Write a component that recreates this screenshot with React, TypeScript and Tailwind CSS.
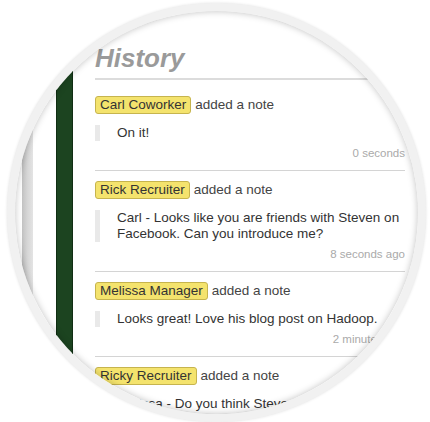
const entries = [
  {
    name: "Carl Coworker",
    note: "On it!",
    time: "0 seconds",
  },
  {
    name: "Rick Recruiter",
    note: "Carl - Looks like you are friends with Steven on Facebook. Can you introduce me?",
    time: "8 seconds ago",
  },
  {
    name: "Melissa Manager",
    note: "Looks great! Love his blog post on Hadoop.",
    time: "2 minutes ago",
  },
  {
    name: "Ricky Recruiter",
    note: "Melissa - Do you think Steven would be a good fit for the team?",
    time: "3 minutes ago",
  },
];

export default function App() {
  return (
    <div className="relative w-[430px] h-[422px] bg-white overflow-hidden font-['Liberation_Sans',Arial,sans-serif]">
      {/* Magnifier lens */}
      <div className="absolute left-[7px] top-[3px] w-[419px] h-[419px] rounded-full border-[8px] border-[#f1f1f1] bg-white overflow-hidden shadow-[0_0_3px_rgba(0,0,0,0.12)]">
        <div className="flex h-full pl-[7px]">
          {/* left page chrome */}
          <div className="w-[11px] shrink-0 bg-gradient-to-r from-[#c2c2c2] via-[#d6d6d6] to-[#e4e4e4]" />
          <div className="w-[23px] shrink-0" />
          <div className="w-[17px] shrink-0 bg-[#1c4420] border-x border-[#102d13]" />

          {/* History panel */}
          <div className="ml-[22px] w-[310px] shrink-0 pt-[32px]">
            <h2 className="text-[26px] leading-[30px] font-bold italic text-[#9a9a9a] pb-[5px] border-b-2 border-[#dcdcdc] w-[340px]">
              History
            </h2>
            <div className="pt-[6px]">
              {entries.map((e) => (
                <div key={e.name} className="pt-[10px] pb-[10px] border-b border-[#d4d4d4]">
                  <div className="flex items-center text-[13.5px] leading-[16px] text-[#444444]">
                    <span className="bg-[#f4e36d] border border-[#c6b44e] rounded-[3px] px-[4px] text-[#333333]">
                      {e.name}
                    </span>
                    <span className="ml-[4px]">added a note</span>
                  </div>
                  <div className="mt-[11px] border-l-[5px] border-[#e9e9e9] pl-[17px] text-[13.5px] leading-[16px] text-[#333333]">
                    {e.note}
                  </div>
                  <div className="mt-[5px] text-right text-[11.5px] leading-[14px] text-[#aaaaaa] whitespace-nowrap">
                    {e.time}
                  </div>
                </div>
              ))}
            </div>
          </div>
        </div>
        {/* inner lens shadow */}
        <div className="pointer-events-none absolute inset-0 rounded-full shadow-[inset_0_0_7px_rgba(0,0,0,0.25)]" />
      </div>
    </div>
  );
}
